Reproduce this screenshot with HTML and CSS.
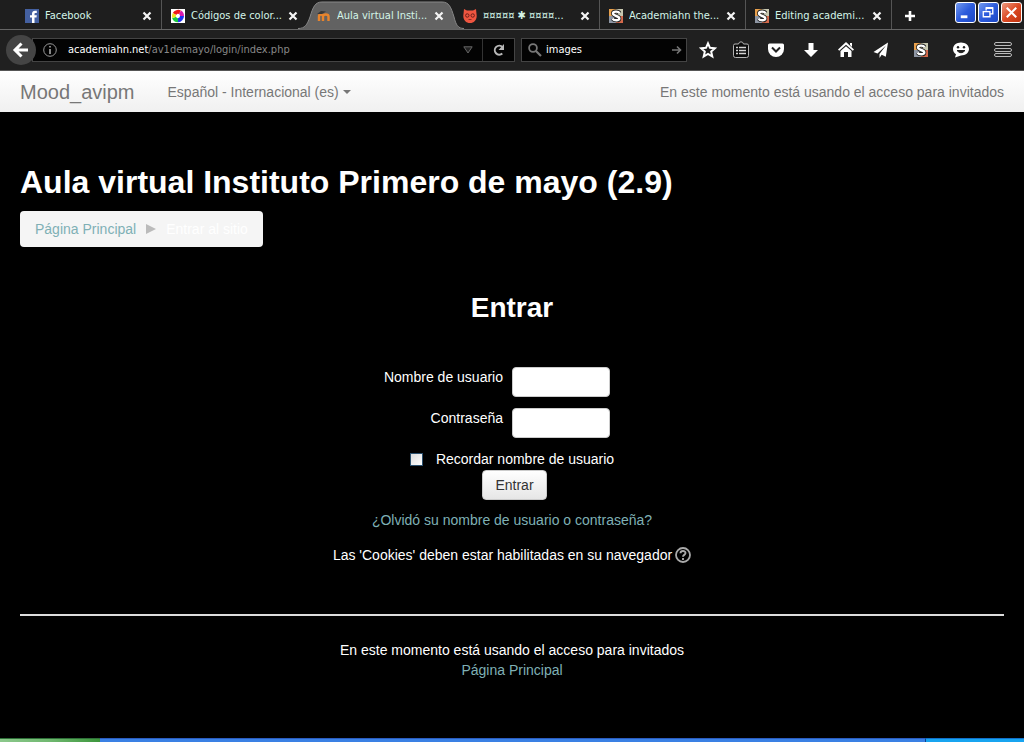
FILE: index.html
```html
<!DOCTYPE html>
<html lang="es">
<head>
<meta charset="utf-8">
<title>Aula virtual Instituto Primero de mayo</title>
<link rel="stylesheet" href="styles.css">
</head>
<body>
<svg class="defs" aria-hidden="true">
  <symbol id="close" viewBox="0 0 10 10"><path d="M1.5 1.5l7 7M8.500 1.500l-7 7" stroke="#f4f4f4" stroke-width="2.200" fill="none"/></symbol>
  <symbol id="stylish" viewBox="0 0 14 14"><path fill="#e8a04c" d="M0 0h7v7H0z"/><path fill="#c8c8b0" d="M7 0h7v7H7z"/><path fill="#8e96a4" d="M0 7h7v7H0z"/><path fill="#d66a4c" d="M7 7h7v7H7z"/><path d="M10.500 4.200C9.500 2 4 2 4 4.600c0 2.800 6.300 2 6.300 4.800 0 2.600-5.300 2.400-6.800.2" fill="none" stroke="#222" stroke-width="4"/><path d="M10.500 4.200C9.500 2 4 2 4 4.600c0 2.800 6.300 2 6.300 4.800 0 2.600-5.300 2.400-6.800.2" fill="none" stroke="#fff" stroke-width="2.400"/></symbol>
</svg>
<header class="browser">
  <div class="tabbar">
    <nav class="tabs" aria-label="Pestañas">
      <div class="tab">
        <svg class="favicon" viewBox="0 0 14 14"><path fill="#4460a0" d="M0 0h14v14H0z"/><path fill="#fff" d="M7 14V8.500H5V6.300h2V4.800C7 2.800 8.200 1.700 10 1.700h1.800v2.200h-1.300c-.8 0-1 .4-1 1.100v1.300h2.300l-.3 2.200h-2V14z"/></svg>
        <a href="#">Facebook</a>
        <button class="close" aria-label="Cerrar"><svg viewBox="0 0 10 10"><use href="#close"/></svg></button>
      </div>
      <div class="tab">
        <svg class="favicon" viewBox="0 0 14 14"><path fill="#fff" d="M0 0h14v14H0z"/><g fill="none" stroke-width="4"><path stroke="#f01818" d="M3.500 5A4.200 4.200 0 0 1 9 3.300"/><path stroke="#d818b0" d="M9 3.300A4.200 4.200 0 0 1 11 7"/><path stroke="#2030f0" d="M11 7A4.200 4.200 0 0 1 7 11.200"/><path stroke="#18c840" d="M7 11.200A4.200 4.200 0 0 1 3 8.500"/><path stroke="#f0e020" d="M3 8.500A4.200 4.200 0 0 1 3.500 5"/></g></svg>
        <a href="#">Códigos de color...</a>
        <button class="close" aria-label="Cerrar"><svg viewBox="0 0 10 10"><use href="#close"/></svg></button>
      </div>
      <div class="tab active">
        <svg class="tabshape" viewBox="0 0 166 28" preserveAspectRatio="none"><path d="M0 28C7 28 9 24 12 16C15 6 17 1 24 1H144C151 1 153 6 156 16C158 24 160 28 166 28Z" fill="#626262"/><path d="M0 27.500C7 27.500 9 24 12 16C15 6 17 1 24 1H144C151 1 153 6 156 16C158 24 160 27.500 166 27.500" fill="none" stroke="#888"/></svg>
        <svg class="favicon" viewBox="0 0 14 14"><path d="M2 12V7.500c0-2.600 4-2.600 4 0V12M6 12V7.500c0-2.600 5.500-2.600 5.500 0V12" stroke="#e8842c" stroke-width="2.400" fill="none"/><path d="M0 5l4-3 5 .5-4 2.500z" fill="#383838"/></svg>
        <a href="#" aria-current="page">Aula virtual Insti...</a>
        <button class="close" aria-label="Cerrar"><svg viewBox="0 0 10 10"><use href="#close"/></svg></button>
      </div>
      <div class="tab">
        <svg class="favicon" viewBox="0 0 14 14"><path fill="#ee5540" d="M1 0l3 1.500h6L13 0l.5 5c1 5-2 9-6.500 9S-.5 10 .5 5z"/><circle cx="4.300" cy="6.500" r="1.700" fill="#eb5a42" stroke="#6e1c18"/><circle cx="9.700" cy="6.500" r="1.700" fill="#eb5a42" stroke="#6e1c18"/><path d="M5.500 10.500h3" stroke="#8e2c22"/></svg>
        <a href="#">¤¤¤¤¤ ✱ ¤¤¤¤...</a>
        <button class="close" aria-label="Cerrar"><svg viewBox="0 0 10 10"><use href="#close"/></svg></button>
      </div>
      <div class="tab">
        <svg class="favicon" viewBox="0 0 14 14"><use href="#stylish"/></svg>
        <a href="#">Academiahn the...</a>
        <button class="close" aria-label="Cerrar"><svg viewBox="0 0 10 10"><use href="#close"/></svg></button>
      </div>
      <div class="tab">
        <svg class="favicon" viewBox="0 0 14 14"><use href="#stylish"/></svg>
        <a href="#">Editing academi...</a>
        <button class="close" aria-label="Cerrar"><svg viewBox="0 0 10 10"><use href="#close"/></svg></button>
      </div>
      <button class="newtab" aria-label="Nueva pestaña"><svg viewBox="0 0 12 12"><path d="M6 1v10M1 6h10" stroke="#fff" stroke-width="2.600"/></svg></button>
    </nav>
    <div class="window-buttons">
      <button class="win" aria-label="Minimizar"><svg viewBox="0 0 20 20"><path d="M5 14.500h7" stroke="#fff" stroke-width="3"/></svg></button>
      <button class="win" aria-label="Restaurar"><svg viewBox="0 0 20 20"><path d="M7.500 8V5.500h7v6H12M4.500 9h7v5.500h-7zM7 5h8M4 9h8" fill="none" stroke="#fff" stroke-width="1.400"/></svg></button>
      <button class="win win-close" aria-label="Cerrar ventana"><svg viewBox="0 0 20 20"><path d="M5 5l10 10M15 5L5 15" stroke="#fff" stroke-width="2.200"/></svg></button>
    </div>
  </div>
  <div class="toolbar">
    <button class="back" aria-label="Atrás"><svg viewBox="0 0 30 30"><path d="M22 15H10M15.500 8.500L9 15l6.500 6.500" fill="none" stroke="#fff" stroke-width="3"/></svg></button>
    <div class="urlbar">
      <svg class="info" viewBox="0 0 14 14"><circle cx="7" cy="7" r="6.300" fill="none" stroke="#999"/><path d="M7 3v1.600M7 6v5" stroke="#aaa" stroke-width="1.600"/></svg>
      <a class="address" href="#"><span class="host">academiahn.net</span>/av1demayo/login/index.php</a>
      <svg class="history" viewBox="0 0 10 8"><path d="M.8.8h8.400L5 7z" fill="#222" stroke="#666"/></svg>
      <button class="reload" aria-label="Recargar"><svg viewBox="0 0 14 14"><path d="M10.300 10.500A4.500 4.500 0 1 1 10.500 4" fill="none" stroke="#b8b8b8" stroke-width="2"/><path d="M12 1v6H6.500z" fill="#b8b8b8"/></svg></button>
    </div>
    <div class="searchbar">
      <svg class="lens" viewBox="0 0 14 14"><circle cx="5" cy="5" r="3.900" fill="none" stroke="#777" stroke-width="1.800"/><path d="M8 8l5 5" stroke="#777" stroke-width="2.200"/></svg>
      <input type="text" value="images" aria-label="Buscar">
      <svg class="go" viewBox="0 0 10 10"><path d="M0 5h8M5 1.500L8.500 5 5 8.500" fill="none" stroke="#777" stroke-width="1.600"/></svg>
    </div>
    <div class="actions">
      <button aria-label="Marcador"><svg viewBox="0 0 18 18"><path d="M9 2.300l2 4.500 4.900.5-3.700 3.300 1.100 4.900L9 13l-4.300 2.500 1.100-4.900-3.700-3.300L7 6.800z" fill="none" stroke="#fff" stroke-width="2"/></svg></button>
      <button class="list" aria-label="Lista de marcadores"><svg viewBox="0 0 18 18"><path d="M1.500 4.500q0-1.500 1.500-1.500h3.500Q7 .8 9 .8T11.500 3H15q1.500 0 1.500 1.500v10q0 2-2 2h-11q-2 0-2-2z" fill="#0c0c0c" stroke="#b4b4b4"/><path d="M4 6.500h2M4 9.500h2M4 12.500h2M7 6.500h7M7 9.500h7M7 12.500h7" stroke="#d4d4d4" stroke-width="1.600"/></svg></button>
      <button aria-label="Pocket"><svg viewBox="0 0 18 18"><path d="M2.500 2.500h13q1.500 0 1.500 1.500v4a8 8 0 0 1-16 0V4q0-1.500 1.500-1.500z" fill="#fff"/><path d="M5 6.500l4 4 4-4" fill="none" stroke="#222" stroke-width="2"/></svg></button>
      <button aria-label="Descargas"><svg viewBox="0 0 18 18"><path d="M6.500 2h5v7H16l-7 7-7-7h4.500z" fill="#fff"/></svg></button>
      <button aria-label="Inicio"><svg viewBox="0 0 18 18"><path d="M9 1l8 7.500-1.200 1.200L9 3.800 2.200 9.700 1 8.500zM13 2h2v4l-2-2z" fill="#fff"/><path d="M9 5.200l5.500 4.700V16H11v-5H7v5H3.500V9.900z" fill="#fff"/></svg></button>
      <button aria-label="Enviar"><svg viewBox="0 0 18 18"><path d="M16 1.500L1.500 11l4 1.500L14 4.500 7.500 13v4l2.200-3.200 4.100 2z" fill="#fff"/></svg></button>
      <button class="wide" aria-label="Stylish"><svg viewBox="0 0 18 18"><use href="#stylish" x="2" y="2" width="14" height="14"/></svg></button>
      <button class="wide" aria-label="Hello"><svg viewBox="0 0 18 18"><path d="M9 1.500c4.500 0 8 2.800 8 6.500s-3.500 6.500-8 6.500L3 16.500l1-3.300C2 12 1 10 1 8c0-3.700 3.500-6.500 8-6.500z" fill="#fff"/><circle cx="6" cy="6.300" r="1.200" fill="#222"/><circle cx="12" cy="6.300" r="1.200" fill="#222"/><path d="M5 9.500h8Q9 14 5 9.500z" fill="#222" stroke="#222"/></svg></button>
      <button class="menu" aria-label="Menú"><svg viewBox="0 0 20 18"><g fill="#222" stroke="#bbb"><rect x="1.500" y="1.500" width="17" height="3" rx="1.500"/><rect x="1.500" y="7.500" width="17" height="3" rx="1.500"/><rect x="1.500" y="12.500" width="17" height="3" rx="1.500"/></g></svg></button>
    </div>
  </div>
</header>
<nav class="navbar">
  <a class="brand" href="#">Mood_avipm</a>
  <a class="language" href="#">Español - Internacional (es)<span class="caret"></span></a>
  <span class="login-info">En este momento está usando el acceso para invitados</span>
</nav>
<main class="page">
  <h1>Aula virtual Instituto Primero de mayo (2.9)</h1>
  <nav class="breadcrumb" aria-label="Ruta">
    <a href="#">Página Principal</a>
    <svg viewBox="0 0 10 10"><path d="M0 0l10 5-10 5z" fill="#bbb"/></svg>
    <span>Entrar al sitio</span>
  </nav>
  <section class="login">
    <h2>Entrar</h2>
    <form>
      <div class="field"><label for="username">Nombre de usuario</label><input id="username" type="text"></div>
      <div class="field"><label for="password">Contraseña</label><input id="password" type="password"></div>
      <div class="remember"><input id="remember" type="checkbox"><label for="remember">Recordar nombre de usuario</label></div>
      <button class="submit" type="submit">Entrar</button>
    </form>
    <a class="forgot" href="#">¿Olvidó su nombre de usuario o contraseña?</a>
    <p class="cookies">Las 'Cookies' deben estar habilitadas en su navegador
      <svg viewBox="0 0 16 16"><circle cx="8" cy="8" r="7" fill="none" stroke="#aaa" stroke-width="1.800"/><path d="M5.500 6.300C5.500 3.200 10.500 3.300 10.500 6.100 10.500 8 8 7.800 8 9.800M8 11v2" fill="none" stroke="#aaa" stroke-width="1.900"/></svg>
    </p>
  </section>
  <footer>
    <span>En este momento está usando el acceso para invitados</span>
    <a href="#">Página Principal</a>
  </footer>
</main>
<div class="taskbar"><span class="start"></span><span class="tasks"></span><span class="tray"></span></div>
</body>
</html>
```
FILE: styles.css
```css
* { box-sizing: border-box; }
body {
  margin: 0;
  min-height: 100vh;
  display: flex;
  flex-direction: column;
  background: #000;
  color: #fff;
  font: 14px/20px "Liberation Sans", Arial, sans-serif;
}
a { color: inherit; text-decoration: none; }
button { border: 0; padding: 0; background: none; cursor: pointer; }
svg { display: block; flex: none; }
.defs { position: absolute; width: 0; height: 0; }

.browser { font: 11px/14px "DejaVu Sans Condensed", "DejaVu Sans", sans-serif; background: #202020; }
.tabbar { display: flex; justify-content: space-between; height: 30px; border-bottom: 1px solid #666; background: #1e1e1e; }
.tabs { display: flex; flex: 1; min-width: 0; padding-left: 16px; }
.tab {
  position: relative;
  display: flex;
  align-items: center;
  flex: 0 1 146px;
  min-width: 0;
  padding: 3px 9px 0;
  gap: 6px;
  border-right: 1px solid #555;
  color: #d4f5e8;
}
.tab a { position: relative; flex: 1; overflow: hidden; white-space: nowrap; }
.tab.active, .tab:has(+ .active) { border-color: transparent; }
.tabshape { position: absolute; left: -10px; top: 1px; width: 166px; height: 28px; }
.favicon { position: relative; width: 14px; height: 14px; }
.close { position: relative; width: 10px; height: 10px; }
.close svg { width: 10px; height: 10px; }
.newtab { width: 36px; padding: 3px 12px 0; }
.newtab svg { width: 12px; height: 12px; }
.window-buttons { display: flex; gap: 2px; padding: 2px; }
.win { width: 21px; height: 21px; border: 1px solid #fff; border-radius: 3px; background: linear-gradient(135deg, #7299ee, #2c5bdc 50%, #1d48c4); }
.win-close { background: linear-gradient(135deg, #ee9a80, #dc4a24 50%, #c03410); }
.win svg { width: 19px; height: 19px; }

.toolbar { display: flex; align-items: center; height: 41px; padding: 0 11px 0 6px; border-bottom: 1px solid #555; }
.back { position: relative; width: 30px; height: 30px; border-radius: 50%; background: #444; }
.urlbar, .searchbar { display: flex; align-items: center; height: 24px; border: 1px solid #444; background: #030303; }
.urlbar { flex: 1; margin-left: -4px; padding-left: 10px; gap: 11px; min-width: 0; }
.info { width: 14px; height: 14px; }
.address { flex: 1; overflow: hidden; white-space: nowrap; color: #888; }
.host { color: #fff; }
.history { width: 10px; height: 8px; }
.reload { width: 32px; height: 22px; margin-left: -2px; padding-left: 9px; border-left: 1px solid #333; }
.reload svg { width: 14px; height: 14px; }
.searchbar { width: 166px; margin-left: 6px; padding: 0 4px 0 6px; gap: 4px; }
.lens { width: 14px; height: 14px; }
.searchbar input { flex: 1; min-width: 0; border: 0; padding: 0; background: none; color: #fff; font: inherit; outline: 0; }
.go { width: 10px; height: 10px; }
.actions { display: flex; align-items: center; padding-left: 12px; gap: 17px; }
.actions svg { width: 18px; height: 18px; }
.actions .list { margin-left: -2px; }
.actions .wide { padding-left: 5px; }
.actions .menu { padding-left: 6px; }
.actions .menu svg { width: 20px; }

.navbar { display: flex; align-items: center; min-height: 41px; padding: 0 20px; background: linear-gradient(#fff, #f0f0f0); color: #777; }
.brand { font-size: 20px; }
.language { display: flex; align-items: center; gap: 4px; margin-left: 33px; }
.caret { border: 4px solid transparent; border-top-color: #777; border-bottom: 0; }
.login-info { margin-left: auto; }

.page { padding: 50px 20px 20px; }
h1 { margin: 0 0 9px; font-size: 32px; line-height: 40px; }
.breadcrumb { display: inline-flex; align-items: center; gap: 10px; padding: 8px 15px; border-radius: 4px; background: #f5f5f5; color: #fff; }
.breadcrumb svg { width: 10px; height: 10px; }
.breadcrumb a, .forgot, footer a { color: #7fb0b5; }
.login { display: flex; flex-direction: column; align-items: center; padding: 41px 0 49px; }
h2 { margin: 0 0 39px; font-size: 28px; line-height: 40px; }
form { display: flex; flex-direction: column; align-items: center; width: 100%; }
.field { display: grid; grid-template-columns: 1fr 1fr; width: 100%; margin-bottom: 11px; }
.field label { padding-right: 9px; text-align: right; }
.field input { width: 98px; height: 30px; border: 1px solid #ccc; border-radius: 4px; background: #fff; }
.remember { display: flex; align-items: center; gap: 13px; }
.remember input { appearance: none; width: 13px; height: 13px; margin: 0; border: 1px solid #2b506e; background: linear-gradient(135deg, #dcdcdc, #fff); }
.submit { margin: 1px 0 10px 5px; padding: 4px 12px; border: 1px solid #ccc; border-radius: 4px; background: linear-gradient(#fff, #e6e6e6); color: #333; font: inherit; }
.cookies { display: flex; align-items: center; gap: 3px; margin: 15px 0 0; }
.cookies svg { width: 16px; height: 16px; }
footer { display: flex; flex-direction: column; align-items: center; padding-top: 24px; border-top: 2px solid #ddd; }

.taskbar { display: flex; height: 4px; margin-top: auto; }
.start { width: 100px; background: linear-gradient(90deg, #8cc88c, #70b870 50%, #3c963c); border-top: 1px solid #2e7038; }
.tasks { flex: 1; background: #3a80e4; border-top: 1px solid #2a5cc0; }
.tray { width: 99px; background: #18a4f0; border-top: 1px solid #1070c8; border-left: 1px solid #104090; }
```
